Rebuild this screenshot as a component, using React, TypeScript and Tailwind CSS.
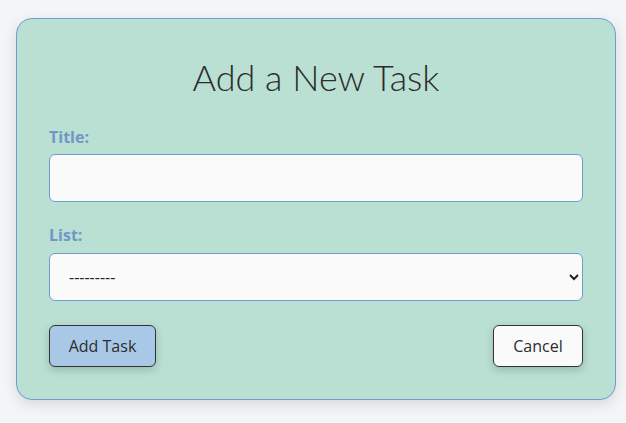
import React from 'react';

export default function App() {
  return (
    <div className="min-h-[423px] w-full bg-[#f4f5f6] pt-[18px] px-4" style={{ fontFamily: '"Open Sans", sans-serif' }}>
      <div className="mx-auto w-[600px] rounded-2xl border border-[#6f9dd2] bg-[#badfd3] px-8 pt-[36px] pb-[32px] shadow-[0_4px_14px_rgba(0,0,0,0.12)]">
        <h1 className="text-center text-[36px] leading-[44px] text-[#2c2c2c]" style={{ fontFamily: 'Lato, "Open Sans", sans-serif', fontWeight: 300 }}>
          Add a New Task
        </h1>
        <form className="mt-[27px] flex flex-col">
          <label className="text-[16px] font-bold leading-[22px] text-[#6f98c6]">Title:</label>
          <input
            type="text"
            className="mt-[6px] h-[48px] w-full rounded-md border border-[#6f9dd2] bg-[#fafafa] px-3 text-[16px] outline-none"
          />
          <label className="mt-[22px] text-[16px] font-bold leading-[22px] text-[#6f98c6]">List:</label>
          <select className="mt-[7px] h-[48px] w-full rounded-md border border-[#6f9dd2] bg-[#fafafa] px-[15px] text-[16px] text-[#222]">
            <option>---------</option>
          </select>
          <div className="mt-[24px] flex items-center justify-between">
            <button
              type="button"
              className="h-[42px] w-[107px] rounded-md border border-[#333] bg-[#a9c8e8] text-[16px] text-[#2c2c2c] shadow-[0_3px_8px_rgba(0,0,0,0.18)]"
            >
              Add Task
            </button>
            <button
              type="button"
              className="h-[42px] w-[90px] rounded-md border border-[#333] bg-[#fafafa] text-[16px] text-[#2c2c2c] shadow-[0_3px_8px_rgba(0,0,0,0.18)]"
            >
              Cancel
            </button>
          </div>
        </form>
      </div>
    </div>
  );
}
